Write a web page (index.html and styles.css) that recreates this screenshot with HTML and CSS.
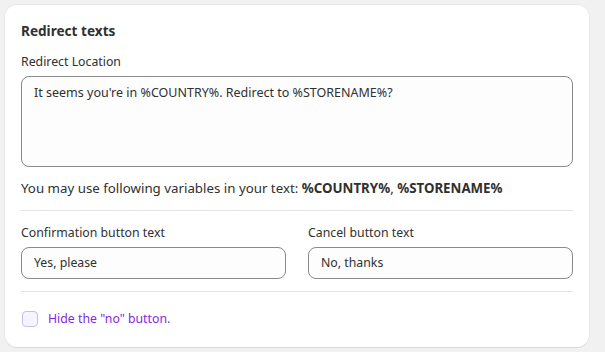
FILE: index.html
```html
<!DOCTYPE html>
<html lang="en">
<head>
<meta charset="utf-8">
<link rel="stylesheet" href="styles.css">
</head>
<body>
<div class="page">
  <section class="card">
    <h2 class="title">Redirect texts</h2>
    <div class="field">
      <label class="label">Redirect Location</label>
      <div class="textarea">It seems you're in %COUNTRY%. Redirect to %STORENAME%?</div>
    </div>
    <p class="help">You may use following variables in your text: <strong>%COUNTRY%</strong>, <strong>%STORENAME%</strong></p>
    <hr class="divider">
    <div class="row">
      <div class="field">
        <label class="label">Confirmation button text</label>
        <div class="input">Yes, please</div>
      </div>
      <div class="field">
        <label class="label">Cancel button text</label>
        <div class="input">No, thanks</div>
      </div>
    </div>
    <hr class="divider">
    <label class="check">
      <span class="box"></span>
      <span class="check-text">Hide the "no" button.</span>
    </label>
  </section>
</div>
</body>
</html>
```
FILE: styles.css
```css
html, body {
  margin: 0;
  padding: 0;
  background: #f1f1f1;
}
body {
  font-family: "Noto Sans", "Open Sans", sans-serif;
  color: #303030;
  font-size: 12.3px;
}
.page {
  padding: 5px 16px 5px 5px;
}
.card {
  background: #ffffff;
  border-radius: 12px;
  box-shadow: 0 1px 0 rgba(26, 26, 26, 0.07), 0 0 0 1px rgba(0,0,0,0.03);
  padding: 16px;
  display: flex;
  flex-direction: column;
  height: 342px;
  box-sizing: border-box;
}
.title {
  margin: 0;
  font-size: 13.6px;
  line-height: 20px;
  font-weight: 700;
}
.field {
  display: flex;
  flex-direction: column;
}
.card > .field {
  margin-top: 11px;
}
.label {
  line-height: 20px;
  padding-bottom: 4px;
}
.textarea {
  height: 91px;
  box-sizing: border-box;
  border: 1px solid #8a8a8a;
  border-radius: 8px;
  background: #fdfdfd;
  padding: 6px 12px;
  line-height: 20px;
  font-size: 12.5px;
}
.help {
  margin: 11px 0 0;
  font-size: 13.3px;
  line-height: 20px;
}
.help strong { font-weight: 700; }
.divider {
  border: 0;
  border-top: 1px solid #e3e3e3;
  margin: 12px 0 0;
}
.row {
  display: grid;
  grid-template-columns: 1fr 1fr;
  gap: 22px;
  margin-top: 12px;
}
.input {
  height: 32px;
  box-sizing: border-box;
  border: 1px solid #8a8a8a;
  border-radius: 8px;
  background: #fdfdfd;
  padding: 0 12px;
  line-height: 30px;
}
.row + .divider { margin-top: 12px; }
.check {
  display: flex;
  align-items: center;
  gap: 10px;
  margin-top: 17px;
  line-height: 20px;
}
.box {
  width: 14px;
  height: 14px;
  border: 1px solid #c8bdf2;
  border-radius: 4px;
  background: #f6f4ff;
  margin-left: 1px;
}
.check-text {
  color: #8428df;
}
```
